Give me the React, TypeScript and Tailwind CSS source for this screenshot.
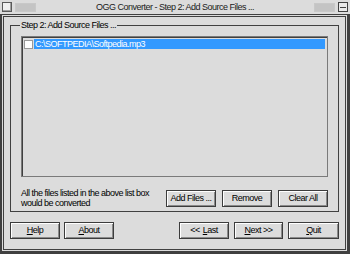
import React from "react";

function Btn({ children, className = "" }: { children: React.ReactNode; className?: string }) {
	return (
		<button
			className={
				"flex h-[17px] items-center justify-center border border-[#3c3c3c] bg-[#dcdcdc] leading-none text-black shadow-[inset_1px_1px_0_#ffffff,inset_-1px_-1px_0_#8a8a8a] " +
				className
			}
		>
			{children}
		</button>
	);
}

export default function App() {
	return (
		<div className="flex h-[254px] w-[350px] flex-col overflow-hidden bg-[#dcdcdc] font-['Liberation_Sans',Arial,sans-serif] text-[9px] tracking-[-0.5px] text-black">
			{/* title bar */}
			<div className="relative flex h-[14px] items-center px-[2px]">
				<div className="h-[10px] w-[10px] border border-[#5a5a5a] bg-[#f0f0f0] shadow-[inset_-1px_-1px_0_#a0a0a0]" />
				<div className="ml-[3px] h-[9px] w-[21px] border border-[#c8c8c8] bg-[#c4c4c4]" />
				<div className="flex-1 text-center leading-none text-[#202020]">
					OGG Converter - Step 2: Add Source Files ...
				</div>
				<div className="mr-[3px] h-[9px] w-[21px] border border-[#c8c8c8] bg-[#c4c4c4]" />
				<div className="flex h-[10px] w-[10px] flex-col justify-center border border-[#404040] bg-[#e8e8e8]">
					<div className="mx-[1px] h-[1px] bg-[#404040]" />
				</div>
			</div>

			{/* window frame */}
			<div className="flex flex-1 flex-col border-t border-l-2 border-r-[3px] border-b-[3px] border-[#404040]">
				<div className="m-[1px] flex flex-1 flex-col border border-[#404040] px-[6px] pt-[7px]">
					{/* group box */}
					<div className="relative mt-[1px] flex h-[187px] flex-col border border-[#404040] px-[10px] pt-[10px]">
						<span className="absolute left-[9px] top-[-6px] bg-[#dcdcdc] px-[1px] leading-[11px]">
							Step 2: Add Source Files ...
						</span>
						<div className="h-[141px] border border-[#7a7a7a] shadow-[inset_1px_1px_0_#404040] px-[2px] pt-[2px]">
							<div className="flex h-[10px] items-center">
								<div className="h-[9px] w-[9px] border border-[#9a9a9a] bg-white" />
								<div className="ml-[1px] flex h-[10px] flex-1 items-center bg-[#3399ff] pl-[1px] leading-none text-white">
									C:\SOFTPEDIA\Softpedia.mp3
								</div>
							</div>
						</div>
						<div className="mt-[11px] flex items-start">
							<p className="w-[140px] leading-[10px]">
								All the files listed in the above list box would be converted
							</p>
							<div className="ml-auto mt-[2px] flex gap-[6px]">
								<Btn className="w-[50px]">Add Files ...</Btn>
								<Btn className="w-[50px]">Remove</Btn>
								<Btn className="w-[50px]">Clear All</Btn>
							</div>
						</div>
					</div>

					{/* bottom buttons */}
					<div className="mt-[10px] flex">
						<Btn className="w-[50px]">
							<span className="underline">H</span>elp
						</Btn>
						<Btn className="ml-[4px] w-[50px]">
							<span className="underline">A</span>bout
						</Btn>
						<Btn className="ml-auto w-[50px]">
							&lt;&lt; <span className="ml-[3px] underline">L</span>ast
						</Btn>
						<Btn className="ml-[5px] w-[49px]">
							<span className="underline">N</span>ext &gt;&gt;
						</Btn>
						<Btn className="ml-[5px] w-[51px]">
							<span className="underline">Q</span>uit
						</Btn>
					</div>
				</div>
			</div>
		</div>
	);
}
